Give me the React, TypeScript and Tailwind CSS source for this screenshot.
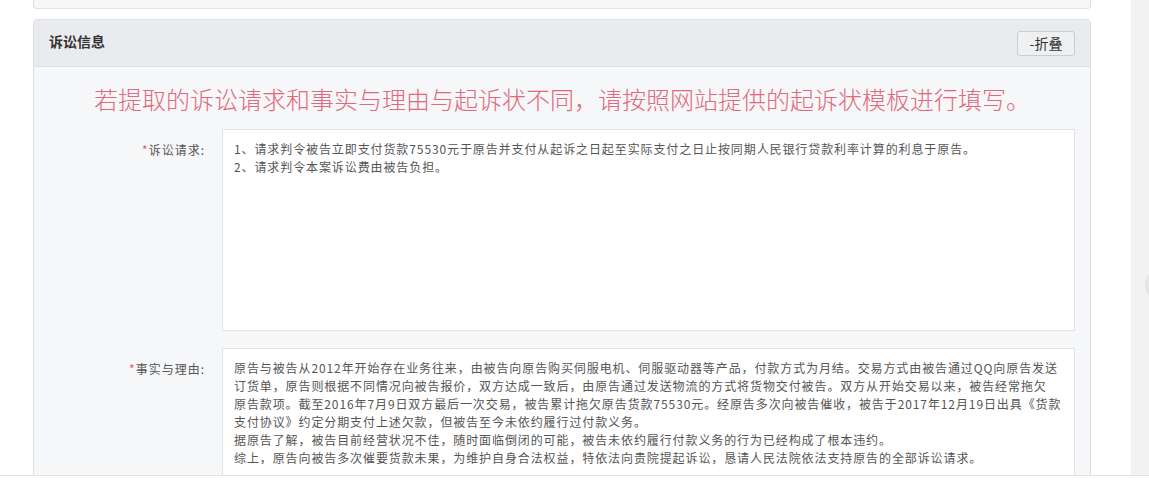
import React from 'react';

const font = "font-['SimSun','Noto_Sans_CJK_SC',sans-serif]";

const claims = [
  '1、请求判令被告立即支付货款75530元于原告并支付从起诉之日起至实际支付之日止按同期人民银行贷款利率计算的利息于原告。',
  '2、请求判令本案诉讼费由被告负担。',
];

const facts = [
  '原告与被告从2012年开始存在业务往来，由被告向原告购买伺服电机、伺服驱动器等产品，付款方式为月结。交易方式由被告通过QQ向原告发送',
  '订货单，原告则根据不同情况向被告报价，双方达成一致后，由原告通过发送物流的方式将货物交付被告。双方从开始交易以来，被告经常拖欠',
  '原告款项。截至2016年7月9日双方最后一次交易，被告累计拖欠原告货款75530元。经原告多次向被告催收，被告于2017年12月19日出具《货款',
  '支付协议》约定分期支付上述欠款，但被告至今未依约履行过付款义务。',
  '据原告了解，被告目前经营状况不佳，随时面临倒闭的可能，被告未依约履行付款义务的行为已经构成了根本违约。',
  '综上，原告向被告多次催要货款未果，为维护自身合法权益，特依法向贵院提起诉讼，恳请人民法院依法支持原告的全部诉讼请求。',
];

const FieldRow = ({ label, lines, height }: { label: string; lines: string[]; height: string }) => (
  <div className="flex gap-[17px] pr-[15px]">
    <div className="w-[171px] shrink-0 pt-[12px] text-right text-[12px] leading-[18px] tracking-[1px] text-[#555]">
      <span className="text-[#e15b6f]">*</span>
      {label}:
    </div>
    <div
      className={`flex-1 ${height} border border-[#e3e3e3] bg-white px-[11px] pt-[10px] text-[12px] leading-[18px] tracking-[0.9px] text-[#555]`}
    >
      {lines.map((l, i) => (
        <div key={i} className="whitespace-nowrap">
          {l}
        </div>
      ))}
    </div>
  </div>
);

export default function App() {
  return (
    <div className={`flex h-[481px] w-[1149px] flex-col overflow-hidden bg-white ${font}`}>
      <div className="flex min-h-0 flex-1">
        <div className="min-w-0 flex-1 pl-[33px] pr-[40px]">
          {/* tail of the panel above */}
          <div className="h-[9px] rounded-b-[4px] border-x border-b border-[#dcdfe3] bg-[#f6f7f9]" />

          <div className="mt-[10px] rounded-t-[4px] border border-[#dcdfe3] bg-[#f6f7f9]">
            <div className="flex h-[47px] items-center justify-between border-b border-[#dcdfe3] bg-[#e9ebee] px-[15px]">
              <span className="pb-[3px] text-[14px] font-bold text-[#333]">诉讼信息</span>
              <button className="h-[25px] w-[58px] rounded-[3px] border border-[#c9ccd0] bg-[#eef0f2] text-[14px] leading-none text-[#333]">
                -折叠
              </button>
            </div>

            <div className="pt-[20px]">
              <div className="mb-[18px] text-center text-[24px] font-light leading-[24px] text-[#e3687b]">
                若提取的诉讼请求和事实与理由与起诉状不同，请按照网站提供的起诉状模板进行填写。
              </div>
              <div className="flex flex-col gap-[17px]">
                <FieldRow label="诉讼请求" lines={claims} height="h-[202px]" />
                <FieldRow label="事实与理由" lines={facts} height="h-[140px]" />
              </div>
            </div>
          </div>
        </div>

        <div className="relative w-[18px] shrink-0 bg-[#f2f2f3]">
          <div className="absolute left-[14px] top-[268px] h-[34px] w-[34px] rounded-full bg-[#e4e4e6]" />
        </div>
      </div>
      <div className="h-[6px] shrink-0 border-t border-[#e3e3e3] bg-white" />
    </div>
  );
}
